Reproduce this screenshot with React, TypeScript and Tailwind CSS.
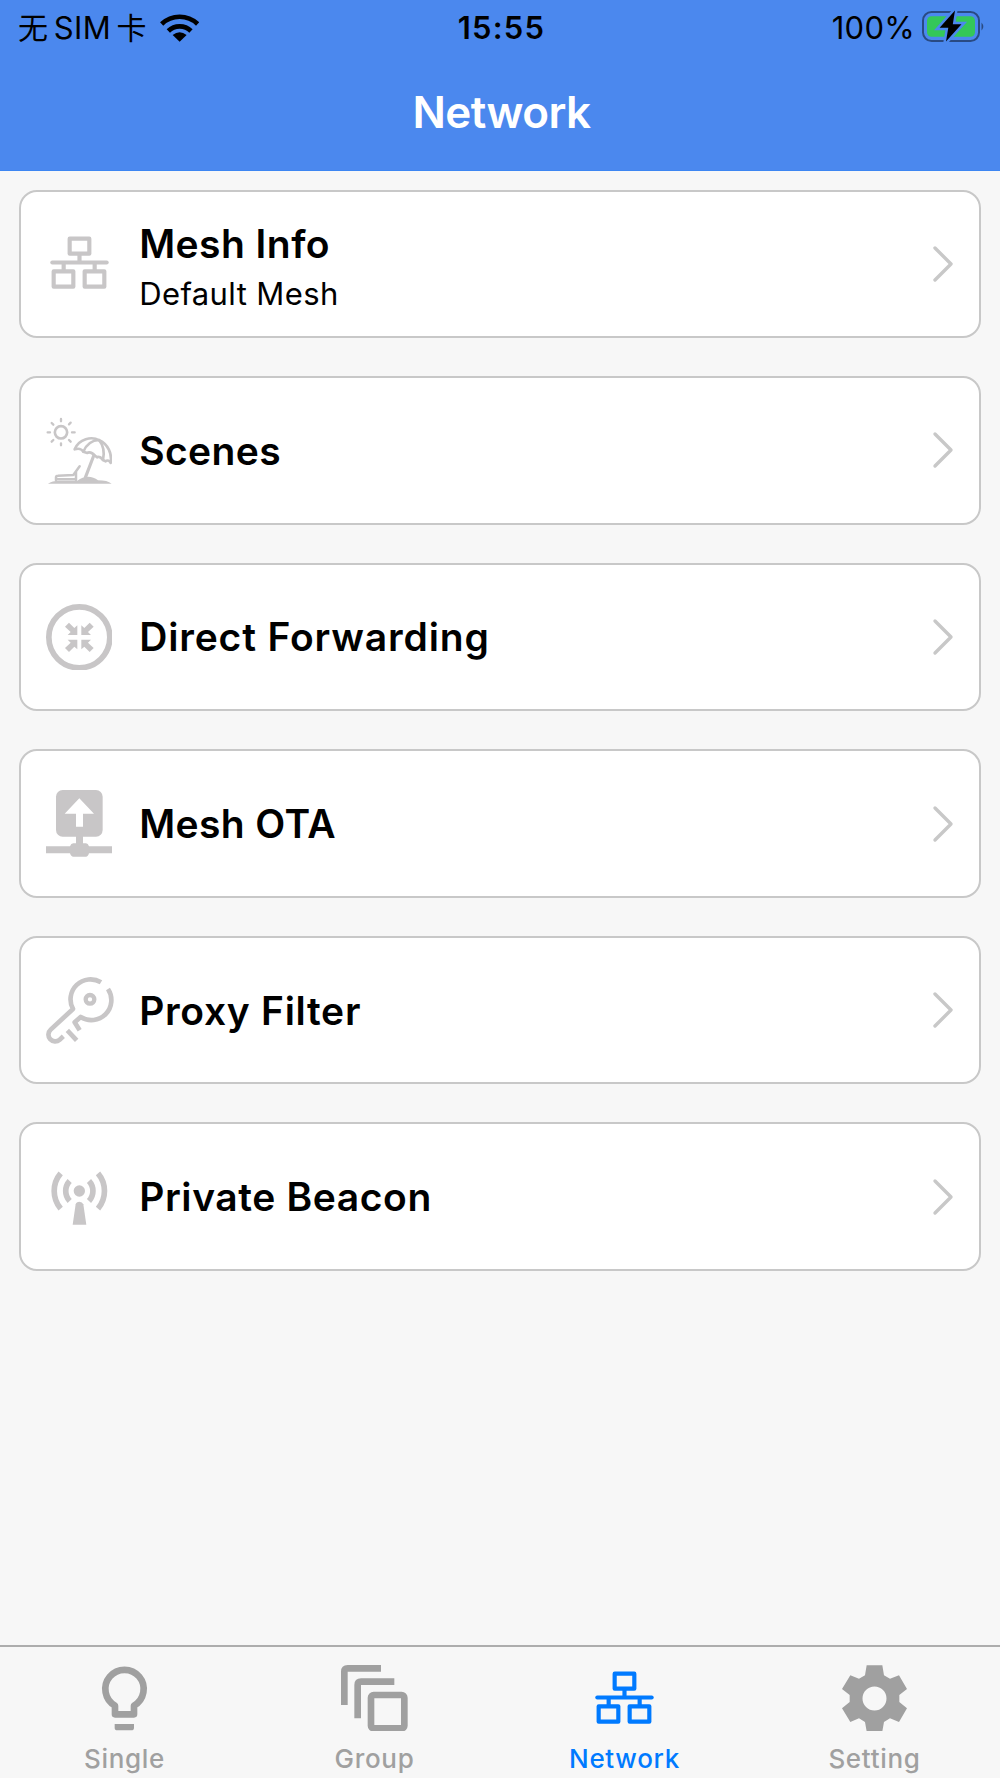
import React, { useState } from 'react';

const MeshIcon = () => (
  <svg viewBox="0 0 200 200" className="size-[66.67px]" fill="none" stroke="currentColor" strokeWidth="12.5" strokeLinejoin="round">
    <rect x="71" y="26" width="59" height="45" />
    <rect x="23" y="124" width="59" height="46" />
    <rect x="116" y="124" width="59" height="46" />
    <path d="M19 97.5H182" strokeLinecap="round" />
    <path d="M100.5 72V97M53 97V122M146 97V122" />
  </svg>
);

const SceneIcon = () => (
  <svg viewBox="0 0 200 200" className="size-[66.67px]" fill="none" stroke="currentColor" strokeWidth="8" strokeLinecap="round" strokeLinejoin="round">
    <circle cx="45" cy="46" r="18.5" />
    <path d="M5 46H12M78 46H86M45 6V13M45 79V85M17 18L22 23M69 22L74 17M17 74L22 69M69 69L74 74" strokeWidth="7" />
    <path d="M86 97C99 65 137 57 160 70C186 82 199 110 194 138C192 131 184 128 179 133L171 129C166 122 158 117 154 121L144 114C139 107 129 104 124 108L112 104C107 96 96 93 86 97Z" />
    <path d="M159 69C137 70 121 83 112 104M159 69C172 85 176 107 171 129" />
    <path d="M144 114L118 182" strokeWidth="9.5" />
    <path d="M30 190V181Q30 176 36 176L82 174L101 148M90 164V190M34 187H88" strokeWidth="7.5" />
    <path d="M6 200Q18 191 40 191H94Q110 179 126 179Q143 179 156 190Q184 190 197 200Z" fill="currentColor" stroke="none" />
  </svg>
);

const ARROW = 'M94 93V64L85 72L69 56L57 68L74 84L65 93Z';

const ForwardIcon = () => (
  <svg viewBox="0 0 200 200" className="size-[66.67px]" fill="currentColor">
    <circle cx="100" cy="100" r="91.5" fill="none" stroke="currentColor" strokeWidth="17" />
    <path d={ARROW} />
    <path d={ARROW} transform="matrix(-1 0 0 1 200 0)" />
    <path d={ARROW} transform="matrix(1 0 0 -1 0 200)" />
    <path d={ARROW} transform="matrix(-1 0 0 -1 200 200)" />
  </svg>
);

const OtaIcon = () => (
  <svg viewBox="0 0 200 200" className="size-[66.67px]" fill="currentColor">
    <rect x="30" y="0" width="140" height="140" rx="20" />
    <path d="M90 138H111V160H120Q126 160 129 169H200V190H129Q126 200 120 200H82Q75 200 72 190H0V169H72Q75 160 82 160H90Z" />
    <path d="M100 25L144 71H111V110H90V71H56Z" fill="#fff" />
  </svg>
);

const KeyIcon = () => (
  <svg viewBox="0 0 200 200" className="size-[66.67px] overflow-visible" fill="none" stroke="currentColor" strokeWidth="14" strokeLinejoin="round">
    <path d="M165 16A60 60 0 0 0 81 96L14 158A20 20 0 0 0 41 188L52 178" />
    <path d="M186 36A60 60 0 0 1 104 120L86 136L101 160" />
    <path d="M64 160L92 190" />
    <circle cx="132" cy="67" r="13" strokeWidth="13" />
  </svg>
);

const BeaconIcon = () => (
  <svg viewBox="0 0 200 200" className="size-[66.67px]" fill="none" stroke="currentColor" strokeWidth="17">
    <circle cx="100" cy="84" r="17" fill="currentColor" stroke="none" />
    <path d="M44 31A82 82 0 0 0 44 137M156 31A82 82 0 0 1 156 137" />
    <path d="M71 54A44 44 0 0 0 71 114M129 54A44 44 0 0 1 129 114" />
    <path d="M80 185L89 124Q91 116 100 116Q109 116 112 124L121 185Z" fill="currentColor" stroke="none" />
  </svg>
);

const BulbIcon = () => (
  <svg viewBox="0 0 200 200" className="size-[66.67px]" fill="none" stroke="currentColor" strokeWidth="20" strokeLinejoin="round">
    <path d="M72 148V122A57.5 57.5 0 1 1 129 122V148Z" />
    <path d="M71 177H129V188Q129 196 121 196H79Q71 196 71 188Z" fill="currentColor" stroke="none" />
  </svg>
);

const GroupIcon = () => (
  <svg viewBox="0 0 200 200" className="size-[66.67px]" fill="none" stroke="currentColor" strokeWidth="20">
    <path d="M10 120V20Q10 10 20 10H120" />
    <path d="M50 160V60Q50 50 60 50H160" />
    <rect x="90" y="90" width="100" height="100" rx="8" />
  </svg>
);

const GearIcon = () => (
  <svg viewBox="0 0 200 200" className="size-[66.67px]" fill="currentColor">
    <path
      fillRule="evenodd"
      d="M77 1H124L129 31L147 41L174 31L198 72L175 90V111L198 130L174 171L147 160L129 171L124 199H77L72 171L54 160L28 171L3 130L26 111V90L3 72L28 31L54 41L72 31ZM100.5 64.5A36 36 0 1 0 100.5 136.5A36 36 0 1 0 100.5 64.5Z"
    />
  </svg>
);

const WifiIcon = () => (
  <svg viewBox="480 36 118 90" className="h-[30px] w-[39.3px]" fill="none" stroke="#000" strokeWidth="14">
    <path d="M485 72A78 78 0 0 1 593 72" />
    <path d="M505 93A48 48 0 0 1 573 93" />
    <path d="M518 105Q539 89 560 105L539 125Z" fill="#000" stroke="none" />
  </svg>
);

const BatteryIcon = () => (
  <svg viewBox="0 0 64 34" className="h-[34px] w-[64px]">
    <rect x="2" y="2" width="56" height="29" rx="8.5" fill="none" stroke="#000" strokeOpacity=".45" strokeWidth="2" />
    <path d="M60.5 12.5Q64 16.5 60.5 20.5Z" fill="#000" fillOpacity=".45" />
    <rect x="6" y="6.3" width="48" height="20.5" rx="4.5" fill="#34c759" />
    <path d="M34 0.5L18.6 17.8H27.3L25 31.5L40.5 14.2H31.8Z" fill="#000" stroke="#4b88ee" strokeWidth="5" paintOrder="stroke" />
  </svg>
);

const MENU = [
  { id: 'mesh', name: 'Mesh Info', desc: 'Default Mesh', icon: MeshIcon, spacing: 'tracking-[0.45px]' },
  { id: 'scenes', name: 'Scenes', icon: SceneIcon, spacing: 'tracking-[0.4px]' },
  { id: 'forward', name: 'Direct Forwarding', icon: ForwardIcon, spacing: 'tracking-[0.85px]' },
  { id: 'ota', name: 'Mesh OTA', icon: OtaIcon, spacing: 'tracking-[0.4px]' },
  { id: 'proxy', name: 'Proxy Filter', icon: KeyIcon, spacing: 'tracking-[0.7px]' },
  { id: 'beacon', name: 'Private Beacon', icon: BeaconIcon, spacing: 'tracking-[0.6px]' },
];

const TABS = [
  { id: 'single', name: 'Single', icon: BulbIcon },
  { id: 'group', name: 'Group', icon: GroupIcon },
  { id: 'network', name: 'Network', icon: MeshIcon },
  { id: 'setting', name: 'Setting', icon: GearIcon },
];

export default function App() {
  const [tab, setTab] = useState('network');

  return (
    <div className="w-[1000px] h-[1778px] flex flex-col overflow-hidden bg-[#f7f7f7] font-['Inter','Noto_Sans_CJK_SC',sans-serif] text-black">
      <header className="h-[171px] shrink-0 flex flex-col bg-[#4b88ee] border-b border-[#3d86f2]">
        {/* Status bar */}
        <div className="h-[54px] grid grid-cols-3 items-center pl-[18px] pr-[15px] text-[31px] leading-none">
          <div className="flex items-center gap-[13px]">
            <span className="tracking-[0.3px] whitespace-nowrap">
              <span className="text-[30px]">无</span>
              <span className="mx-[5.5px]">SIM</span>
              <span className="text-[30px]">卡</span>
            </span>
            <WifiIcon />
          </div>
          <div className="text-center font-semibold tracking-[1.2px]">15:55</div>
          <div className="flex items-center justify-end gap-[6px]">
            <span className="tracking-[0.3px]">100%</span>
            <BatteryIcon />
          </div>
        </div>
        <h1 className="h-[115px] flex items-center justify-center pl-[3px] text-[44px] leading-none font-semibold tracking-[-0.55px] text-white">Network</h1>
      </header>

      <main className="flex-1 flex flex-col gap-[38px] px-[19px] pt-[18.5px]">
        {MENU.map(({ id, name, desc, icon: Icon, spacing }) => (
          <button
            key={id}
            className="h-[148.6px] flex items-center pl-[24.5px] pr-[25px] bg-white border-2 border-[#c8c8c8] rounded-[18px] text-left"
          >
            <span className="text-[#c8c6c7]">
              <Icon />
            </span>
            <span className={`flex-1 ml-[27px] ${desc ? 'pt-[10px]' : 'pt-px'}`}>
              <span className={`block text-[39px] leading-[50px] font-semibold ${spacing}`}>{name}</span>
              {desc && <span className="block text-[31px] leading-[49px] tracking-[0.4px]">{desc}</span>}
            </span>
            <svg viewBox="0 0 22 38" className="w-[22px] h-[38px]" fill="none" stroke="#c8c8c8" strokeWidth="3.4" strokeLinecap="round" strokeLinejoin="round">
              <path d="M3 3L19 19L3 35" />
            </svg>
          </button>
        ))}
      </main>

      <nav className="h-[133px] shrink-0 grid grid-cols-4 border-t-2 border-[#adadad]">
        {TABS.map(({ id, name, icon: Icon }) => (
          <button
            key={id}
            onClick={() => setTab(id)}
            className={`flex flex-col items-center pr-px pt-[17.5px] ${tab === id ? 'text-[#007aff]' : 'text-[#a0a0a0]'}`}
          >
            <Icon />
            <span className="mt-[10.5px] text-[26px] leading-[34px] font-medium tracking-[0.7px]">{name}</span>
          </button>
        ))}
      </nav>
    </div>
  );
}
